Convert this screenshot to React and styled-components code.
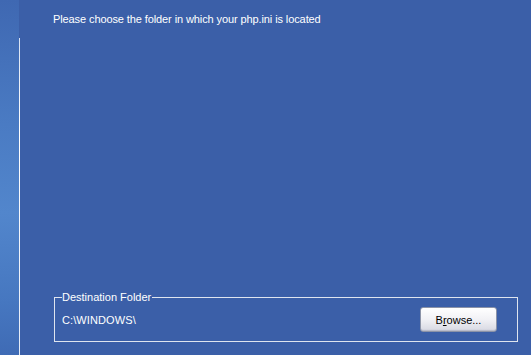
import styled, { createGlobalStyle } from "styled-components";

const Global = createGlobalStyle`
  html, body { margin: 0; padding: 0; }
  body {
    width: 531px;
    height: 355px;
    overflow: hidden;
    font-family: "Liberation Sans", Arial, sans-serif;
  }
`;

function App() {
  return (
    <>
      <Global />
      <Window>
        <SideStrip />
        <Divider />
        <Panel>
          <Prompt>Please choose the folder in which your php.ini is located</Prompt>
          <Spacer />
          <FolderBox>
            <Legend>Destination Folder</Legend>
            <FolderRow>
              <Path>C:\WINDOWS\</Path>
              <Button>
                B<u>r</u>owse...
              </Button>
            </FolderRow>
          </FolderBox>
        </Panel>
      </Window>
    </>
  );
}

const Window = styled.div`
  width: 531px;
  height: 355px;
  display: flex;
  background: #3b5fa8;
  color: #fff;
`;

const SideStrip = styled.div`
  width: 19px;
  background: linear-gradient(180deg, #3f68b2 0%, #4a7bc3 35%, #5286cc 60%, #4677c0 85%, #3f6bb5 100%);
`;

const Divider = styled.div`
  width: 1px;
  margin-top: 38px;
  background: linear-gradient(180deg, #d8e2f2 0%, #ffffff 30%, #e4ebf7 100%);
`;

const Panel = styled.div`
  flex: 1;
  display: flex;
  flex-direction: column;
  padding: 13px 13px 13px 34px;
`;

const Prompt = styled.div`
  margin-left: -1px;
  font-size: 11px;
  line-height: 13px;
  letter-spacing: -0.1px;
`;

const Spacer = styled.div`
  flex: 1;
`;

const FolderBox = styled.fieldset`
  margin: 0;
  padding: 3px 20px 9px 7px;
  border: 1px solid #dfe5ef;
  display: flex;
  flex-direction: column;
`;

const Legend = styled.legend`
  padding: 0 1px 0 0;
  font-size: 11px;
  line-height: 13px;
`;

const FolderRow = styled.div`
  display: flex;
  align-items: center;
  justify-content: space-between;
`;

const Path = styled.span`
  font-size: 11px;
  line-height: 13px;
  margin-top: 1px;
  letter-spacing: 0.1px;
`;

const Button = styled.button`
  width: 77px;
  height: 25px;
  border: 1px solid #8b93a8;
  border-radius: 3px;
  background: linear-gradient(180deg, #ffffff 0%, #f1f1f5 50%, #dcdde6 90%, #c9cad6 100%);
  color: #000;
  font-family: "Liberation Sans", Arial, sans-serif;
  font-size: 11px;
  padding: 0;
  box-shadow: inset 0 -1px 0 #b9bccb;
`;

export default App;
